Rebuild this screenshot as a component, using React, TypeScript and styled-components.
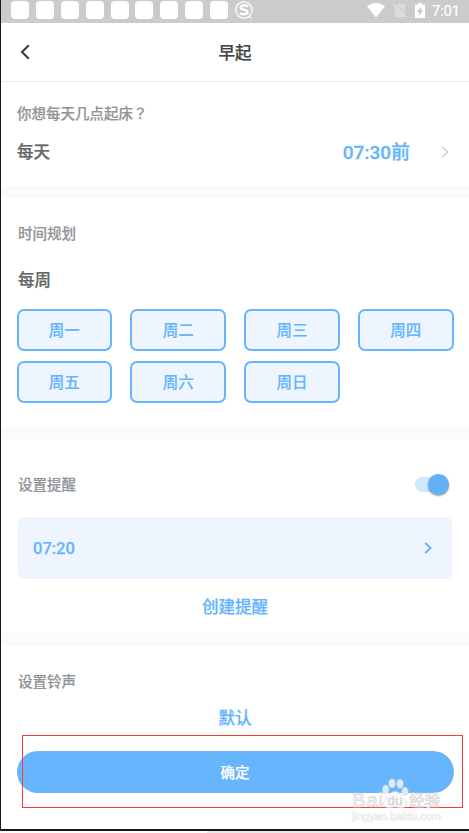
import React from "react";
import styled, { createGlobalStyle } from "styled-components";

const GlobalStyle = createGlobalStyle`
  * { box-sizing: border-box; }
  body { margin: 0; background: #f1f0ef; }
  button { font: inherit; padding: 0; margin: 0; cursor: pointer; }
`;

const BLUE = "#66b5fd";

const Screen = styled.main`
  position: relative;
  width: 469px;
  height: 833px;
  overflow: hidden;
  display: flex;
  flex-direction: column;
  font-family: Roboto, "Noto Sans CJK SC", sans-serif;
`;

const Phone = styled.div`
  height: 831px;
  flex: none;
  display: flex;
  flex-direction: column;
  background: #fff;
  border-left: 1px solid #141824;
  border-bottom: 2px solid #141824;
`;

const BottomStrip = styled.div`
  flex: 1;
  background: linear-gradient(90deg, #fdfcf6 207px, #e9e8e8 207px);
`;

const StatusBar = styled.div`
  height: 23px;
  flex: none;
  display: flex;
  align-items: flex-start;
  background: #cbcbcb;
  color: #fff;
  padding: 0 9px 0 10px;
`;

const Notifications = styled.div`
  display: flex;
  gap: 6.9px;
  padding-top: 1px;
`;

const NoticeTile = styled.span`
  width: 18px;
  height: 18px;
  border-radius: 4px;
  background: #fff;
`;

const SystemIcons = styled.div`
  margin-left: auto;
  display: flex;
  height: 20px;
  align-items: center;
`;

const IconRow = styled.div`
  display: flex;
  gap: 8px;
`;

const Clock = styled.span`
  width: 28px;
  margin-left: 7px;
  padding-top: 2px;
  font-size: 14.5px;
  line-height: 21px;
  white-space: nowrap;
  -webkit-text-stroke: 0.2px;
`;

const Header = styled.header`
  height: 59px;
  flex: none;
  display: grid;
  grid-template-columns: 60px 1fr 60px;
  align-items: center;
  border-bottom: 1px solid #ebebeb;
  svg { display: block; margin-left: 18px; }
`;

const Title = styled.h1`
  margin: 0;
  padding-top: 3px;
  text-align: center;
  font-size: 16.5px;
  line-height: 24px;
  font-weight: 500;
  color: #444;
  -webkit-text-stroke: 0.25px;
`;

const Section = styled.section<{ $h: number; $top: number }>`
  height: ${(p) => p.$h}px;
  flex: none;
  padding: ${(p) => p.$top}px 16px 0;
`;

const Band = styled.div<{ $h?: number }>`
  height: ${(p) => p.$h ?? 12}px;
  flex: none;
  background: #fafafa;
`;

const Label = styled.h2<{ $left?: number }>`
  margin: 0 0 0 ${(p) => p.$left ?? 1}px;
  font-size: 14.5px;
  line-height: 22px;
  font-weight: 500;
  color: #92959b;
  -webkit-text-stroke: 0.2px;
`;

const QuestionMark = styled.span`
  display: inline-block;
  height: 22px;
  line-height: 18px;
  vertical-align: top;
  font-family: "Noto Sans CJK TC", sans-serif;
  text-spacing-trim: space-all;
`;

const Strong = styled.span`
  font-size: 16.5px;
  line-height: 24px;
  font-weight: 500;
  color: #666;
  -webkit-text-stroke: 0.25px;
`;

const TimeRow = styled.div`
  display: flex;
  align-items: center;
  height: 28px;
  margin-top: 13px;
  svg { margin: 0 4.5px 2px 30.5px; }
`;

const TimeValue = styled.span`
  margin-left: auto;
  font-size: 19px;
  line-height: 28px;
  font-weight: 500;
  color: ${BLUE};
  -webkit-text-stroke: 0.3px;
`;

const WeekTitle = styled.div`
  margin: 23px 0 0 1px;
  height: 24px;
  display: flex;
`;

const Days = styled.div`
  display: grid;
  grid-template-columns: repeat(4, 95.5px);
  justify-content: space-between;
  row-gap: 10px;
  margin: 16px 0 0 -0.4px;
  width: 437px;
`;

const Day = styled.button`
  height: 42px;
  border: 2px solid ${BLUE};
  border-radius: 7px;
  background: #eef5ff;
  color: ${BLUE};
  font-size: 15.5px;
  line-height: 36px;
  padding-top: 2px;
  font-weight: 500;
  -webkit-text-stroke: 0.15px;
`;

const RemindRow = styled.div`
  display: flex;
  align-items: center;
  justify-content: space-between;
  height: 24px;
  h2 { padding-top: 4px; }
`;

const Track = styled.button`
  width: 34px;
  height: 15px;
  border: 0;
  border-radius: 8px;
  margin-right: 4px;
  background: #d0e7fe;
  display: flex;
  align-items: center;
  justify-content: flex-end;
`;

const Knob = styled.span`
  flex: none;
  width: 21px;
  height: 21px;
  border-radius: 50%;
  background: #63b0f6;
  box-shadow: 0 1px 2px rgba(0, 0, 0, 0.4);
`;

const ReminderCard = styled.button`
  display: flex;
  align-items: center;
  justify-content: space-between;
  width: 434px;
  height: 62px;
  margin: 21px 0 0 1px;
  padding: 0 20px 0 15px;
  border: 0;
  border-radius: 6px;
  background: #eef5ff;
  color: ${BLUE};
  font-size: 16.5px;
  font-weight: 500;
  -webkit-text-stroke: 0.25px;
`;

const TextLink = styled.button<{ $top: number }>`
  display: block;
  margin: ${(p) => p.$top}px auto 0;
  border: 0;
  background: none;
  color: ${BLUE};
  font-size: 16.5px;
  line-height: 24px;
  font-weight: 500;
  -webkit-text-stroke: 0.25px;
`;

const Confirm = styled.button`
  display: block;
  width: 437px;
  height: 42px;
  margin: 20px 0 0 -0.4px;
  padding-top: 3px;
  border: 0;
  border-radius: 21px;
  background: ${BLUE};
  color: #fff;
  font-size: 14.5px;
  line-height: 39px;
  font-weight: 500;
  -webkit-text-stroke: 0.2px;
`;

const Highlight = styled.div`
  position: absolute;
  left: 22px;
  top: 735px;
  width: 441px;
  height: 73px;
  border: 1px solid #f83a3c;
  pointer-events: none;
`;

const Watermark = styled.svg`
  position: absolute;
  left: 348px;
  top: 776px;
  pointer-events: none;
`;

const Chevron = ({ color, width = 2 }: { color: string; width?: number }) => (
  <svg width="8" height="12" viewBox="0 0 8 12" fill="none">
    <path d="M1.3 1L6.5 6L1.3 11" stroke={color} strokeWidth={width} />
  </svg>
);

const SogouIcon = () => (
  <svg width="19" height="19" viewBox="0 0 19 19" fill="none">
    <circle cx="8.9" cy="9" r="8.2" stroke="#fff" strokeWidth="1.2" />
    <path
      d="M13.2 5.6C11.8 4.4 5.8 3.6 5.5 6.5C5.3 9.2 12.9 8.2 12.6 11.2C12.3 14.2 6.2 13.5 4.6 12.2"
      stroke="#fff"
      strokeWidth="2.3"
    />
    <path d="M13.8 15.5L16.8 17.4" stroke="#fff" strokeWidth="1.2" />
  </svg>
);

const WifiIcon = () => (
  <svg width="18" height="15" viewBox="0 0 18 15">
    <path d="M0 3.2Q9-3 18 3.2L9 14.5Z" fill="#fff" />
  </svg>
);

const NoSimIcon = () => (
  <svg width="14" height="15" viewBox="0 0 14 15">
    <path d="M5.5 .5H12V14.5H1.5V4.5Z" fill="#dadada" />
    <path d="M1.4 .6L13.6 13" stroke="#cbcbcb" strokeWidth="1.2" />
    <path d="M.7 1.4L13 14" stroke="#ececec" strokeWidth="1" />
  </svg>
);

const BatteryIcon = () => (
  <svg width="10" height="15" viewBox="0 0 10 15">
    <path d="M3 0H7V1.5H10V15H0V1.5H3Z" fill="#fff" />
    <path d="M6.5 3.5L2 9H4.6L3.5 13L8 7.4H5.5Z" fill="#bdbdbd" />
  </svg>
);

const BaiduMark = () => (
  <Watermark width="96" height="48" viewBox="0 0 96 48">
    <g fill="#dcecfa" stroke="#c6d9e9" strokeWidth=".6">
      <ellipse cx="37.7" cy="13.3" rx="3.2" ry="4.2" />
      <ellipse cx="44" cy="7.3" rx="3.2" ry="4.4" />
      <ellipse cx="52" cy="7.8" rx="3.2" ry="4.4" />
      <ellipse cx="57" cy="15.2" rx="3.2" ry="4" />
    </g>
    <path
      d="M47 15.5C42 15.5 41 20 38 23C33 28 36 32 41 31.5Q47 30.4 53 31.5C59 32 61 28 56.5 23C53 20 52 15.5 47 15.5Z"
      fill="#fbfbfb"
      stroke="#dadada"
      strokeWidth=".8"
    />
    <g fill="#f8f8f8" stroke="#d6d6d6" strokeWidth=".7" fontFamily="Liberation Sans, sans-serif">
      <text x="4" y="30.5" fontSize="20" textLength="31">Bai</text>
      <text x="39.5" y="28.5" fontSize="13" textLength="15" fill="#d2d2d2" strokeWidth=".4">du</text>
      <text x="61" y="30" fontSize="15.5" fontFamily="Noto Sans CJK SC, sans-serif" textLength="31" stroke="#d8d8d8">经验</text>
      <text x="4" y="43.5" fontSize="11" textLength="89" fill="#f4f4f4" stroke="#ebebeb">jingyan.baidu.com</text>
    </g>
  </Watermark>
);

const DAYS = ["周一", "周二", "周三", "周四", "周五", "周六", "周日"];

export default function App() {
  return (
    <Screen lang="zh-CN">
      <GlobalStyle />
      <Phone>
        <StatusBar>
          <Notifications>
            {Array.from({ length: 9 }, (_, i) => (
              <NoticeTile key={i} />
            ))}
            <SogouIcon />
          </Notifications>
          <SystemIcons>
            <IconRow>
              <WifiIcon />
              <NoSimIcon />
              <BatteryIcon />
            </IconRow>
            <Clock>7:01</Clock>
          </SystemIcons>
        </StatusBar>
        <Header>
          <svg width="12" height="16" viewBox="0 0 12 16" fill="none">
            <path d="M9.8 1.2L3 8L9.8 14.8" stroke="#3c3c3c" strokeWidth="2" />
          </svg>
          <Title>早起</Title>
        </Header>
        <Section $h={104} $top={22}>
          <Label $left={0}>
            你想每天几点起床<QuestionMark lang="zh-TW">？</QuestionMark>
          </Label>
          <TimeRow>
            <Strong>每天</Strong>
            <TimeValue>07:30前</TimeValue>
            <Chevron color="#cfcfcf" width={1.6} />
          </TimeRow>
        </Section>
        <Band />
        <Section $h={229} $top={26}>
          <Label>时间规划</Label>
          <WeekTitle>
            <Strong>每周</Strong>
          </WeekTitle>
          <Days>
            {DAYS.map((d) => (
              <Day key={d}>{d}</Day>
            ))}
          </Days>
        </Section>
        <Band />
        <Section $h={194} $top={33}>
          <RemindRow>
            <Label>设置提醒</Label>
            <Track role="switch" aria-checked="true" aria-label="设置提醒">
              <Knob />
            </Track>
          </RemindRow>
          <ReminderCard>
            07:20
            <Chevron color={BLUE} />
          </ReminderCard>
          <TextLink $top={17}>创建提醒</TextLink>
        </Section>
        <Band $h={13} />
        <Section $h={183} $top={26}>
          <Label>设置铃声</Label>
          <TextLink $top={13}>默认</TextLink>
          <Confirm>确定</Confirm>
        </Section>
      </Phone>
      <BottomStrip />
      <Highlight />
      <BaiduMark />
    </Screen>
  );
}
